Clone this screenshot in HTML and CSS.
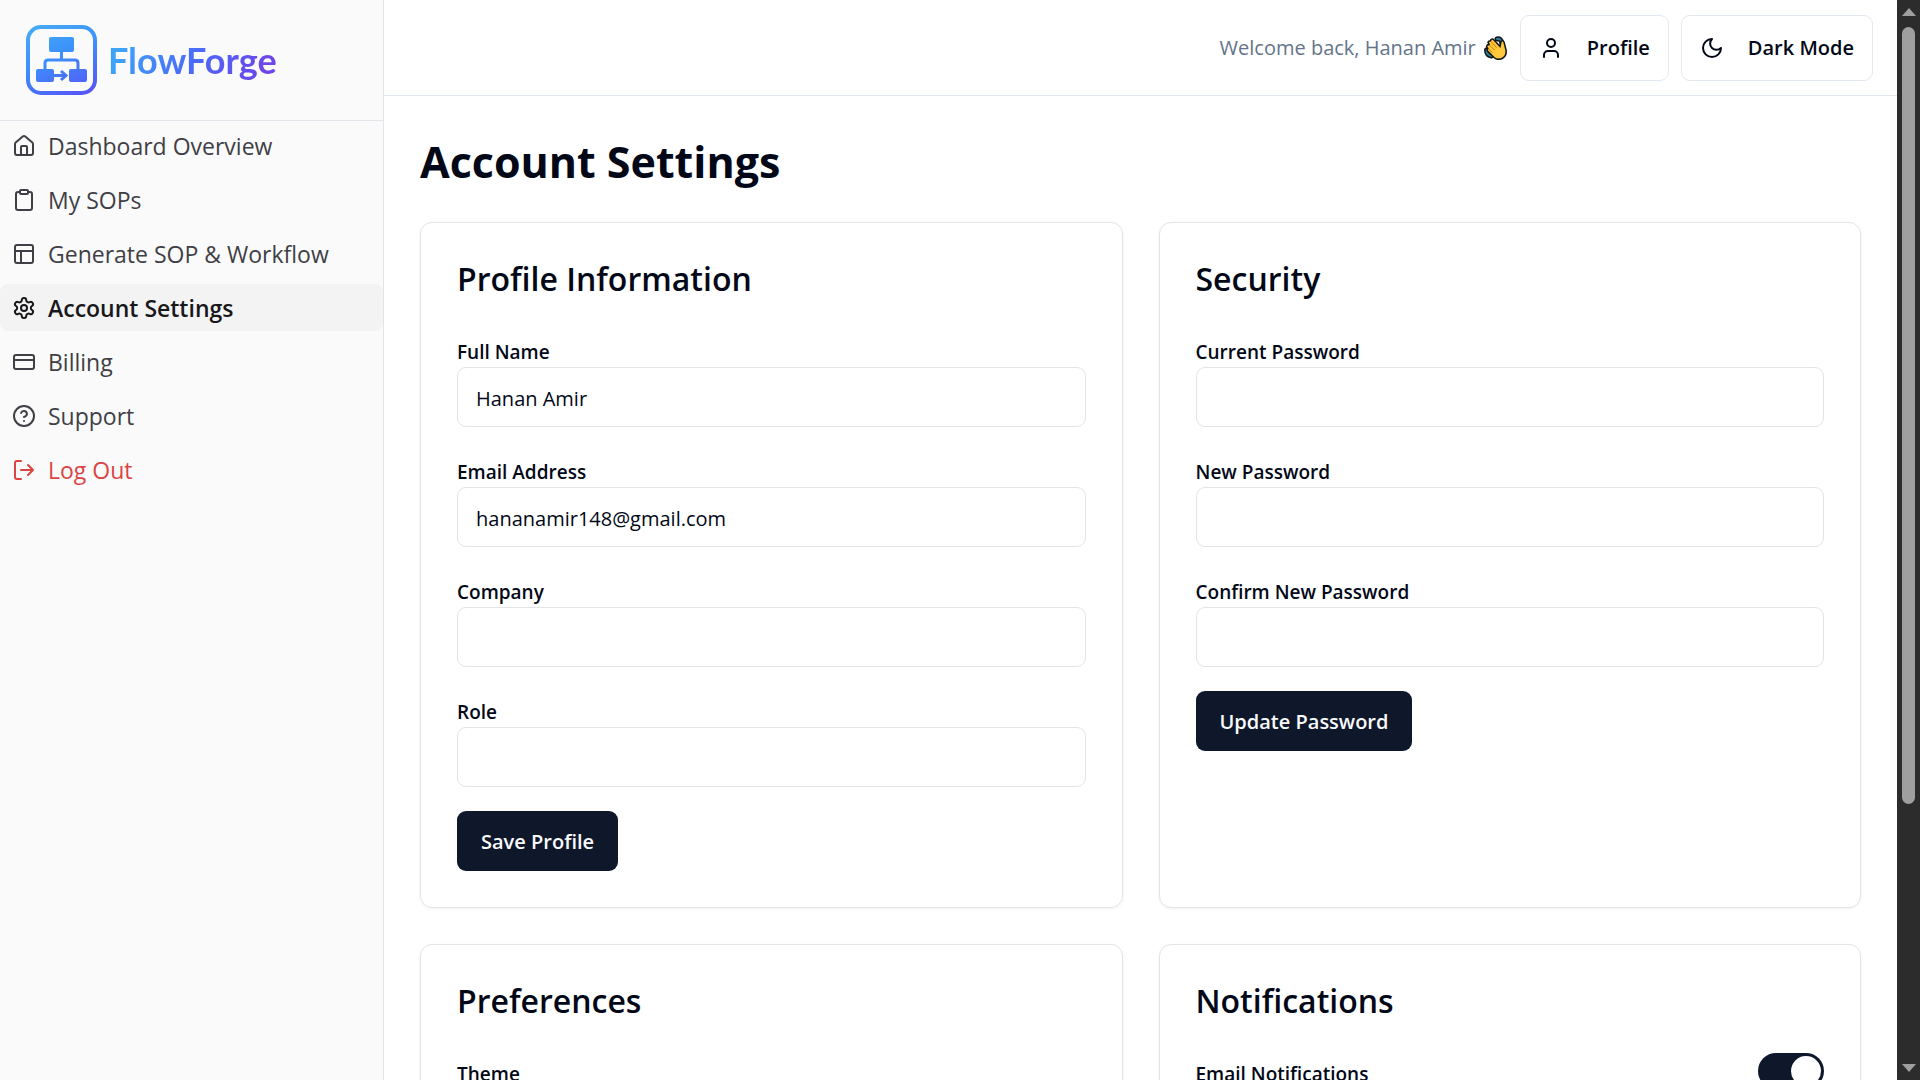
FILE: index.html
```html
<!DOCTYPE html>
<html lang="en">
<head>
    <meta charset="UTF-8">
    <meta name="viewport" content="width=device-width, initial-scale=1.0">
    <title>FlowForge - Account Settings</title>
    <link rel="stylesheet" href="styles.css">
</head>
<body>
    <aside class="sidebar">
        <a class="logo" href="#">
            <svg class="logo-icon" viewBox="0 0 72 72" aria-hidden="true">
                <defs>
                    <linearGradient id="logo-gradient" gradientUnits="userSpaceOnUse" x1="20" y1="0" x2="50" y2="72">
                        <stop offset="0" stop-color="#45a8f5"/>
                        <stop offset="0.4" stop-color="#3b93fb"/>
                        <stop offset="1" stop-color="#5558f5"/>
                    </linearGradient>
                </defs>
                <rect x="2" y="3" width="67" height="66" rx="13" fill="none" stroke="url(#logo-gradient)" stroke-width="4"/>
                <g fill="url(#logo-gradient)">
                    <rect x="23" y="13" width="25" height="15" rx="2"/>
                    <rect x="10" y="45" width="18" height="13" rx="2"/>
                    <rect x="43" y="45" width="18" height="13" rx="2"/>
                </g>
                <path d="M35.500 28v8M19 45v-6q0-3 3-3h27q3 0 3 3v6M28 51.500h11M35 47l5 4.500-5 4.500" fill="none" stroke="url(#logo-gradient)" stroke-width="3"/>
            </svg>
            <span class="logo-text">FlowForge</span>
        </a>
        <nav class="menu">
            <a class="menu-item" href="#">
                <svg class="icon" viewBox="0 0 24 24"><path d="M3 10a2 2 0 0 1 .7-1.500l7-6a2 2 0 0 1 2.600 0l7 6A2 2 0 0 1 21 10v9a2 2 0 0 1-2 2H5a2 2 0 0 1-2-2z"/><path d="M9 21v-8a1 1 0 0 1 1-1h4a1 1 0 0 1 1 1v8"/></svg>
                Dashboard Overview
            </a>
            <a class="menu-item" href="#">
                <svg class="icon" viewBox="0 0 24 24"><rect x="8" y="2" width="8" height="4" rx="1"/><path d="M16 4h2a2 2 0 0 1 2 2v14a2 2 0 0 1-2 2H6a2 2 0 0 1-2-2V6a2 2 0 0 1 2-2h2"/></svg>
                My SOPs
            </a>
            <a class="menu-item" href="#">
                <svg class="icon" viewBox="0 0 24 24"><rect x="3" y="3" width="18" height="18" rx="2"/><path d="M3 9h18M9 21V9"/></svg>
                Generate SOP &amp; Workflow
            </a>
            <a class="menu-item active" href="#" aria-current="page">
                <svg class="icon" viewBox="0 0 24 24"><path d="M12.220 2h-.44a2 2 0 0 0-2 2v.18a2 2 0 0 1-1 1.730l-.43.25a2 2 0 0 1-2 0l-.15-.08a2 2 0 0 0-2.730.73l-.22.38a2 2 0 0 0 .73 2.730l.15.1a2 2 0 0 1 1 1.720v.51a2 2 0 0 1-1 1.740l-.15.09a2 2 0 0 0-.73 2.730l.22.38a2 2 0 0 0 2.730.73l.15-.08a2 2 0 0 1 2 0l.43.25a2 2 0 0 1 1 1.730V20a2 2 0 0 0 2 2h.44a2 2 0 0 0 2-2v-.18a2 2 0 0 1 1-1.730l.43-.25a2 2 0 0 1 2 0l.15.08a2 2 0 0 0 2.730-.73l.22-.39a2 2 0 0 0-.73-2.730l-.15-.08a2 2 0 0 1-1-1.740v-.5a2 2 0 0 1 1-1.740l.15-.09a2 2 0 0 0 .73-2.730l-.22-.38a2 2 0 0 0-2.730-.73l-.15.08a2 2 0 0 1-2 0l-.43-.25a2 2 0 0 1-1-1.730V4a2 2 0 0 0-2-2z"/><circle cx="12" cy="12" r="3"/></svg>
                Account Settings
            </a>
            <a class="menu-item" href="#">
                <svg class="icon" viewBox="0 0 24 24"><rect x="2" y="5" width="20" height="14" rx="2"/><path d="M2 10h20"/></svg>
                Billing
            </a>
            <a class="menu-item" href="#">
                <svg class="icon" viewBox="0 0 24 24"><circle cx="12" cy="12" r="10"/><path d="M9.090 9a3 3 0 0 1 5.830 1c0 2-3 3-3 3M12 17h.01"/></svg>
                Support
            </a>
            <a class="menu-item logout" href="#">
                <svg class="icon" viewBox="0 0 24 24"><path d="M9 21H5a2 2 0 0 1-2-2V5a2 2 0 0 1 2-2h4M16 17l5-5-5-5M21 12H9"/></svg>
                Log Out
            </a>
        </nav>
    </aside>

    <div class="page">
        <header class="topbar">
            <p class="welcome">
                Welcome back, Hanan Amir
                <svg class="wave" viewBox="0 0 24 24" role="img" aria-label="waving hand">
                    <path d="M13 3q4-1 5 4.500M2.500 14q0 5 5 6" fill="none" stroke="#14141a" stroke-width="5" stroke-linecap="round"/>
                    <path d="M13 3q4-1 5 4.500M2.500 14q0 5 5 6" fill="none" stroke="#2a8096" stroke-width="2" stroke-linecap="round"/>
                    <path d="M3 9.500q1-1.500 2.500-.5L4 6.500Q4.500 4.500 6.500 5L7 3.500q1.500-1 3 .5l6 6.500 1-5q2-1.500 3 .5l2 8q1 5-3 8-5 3-9-.5L3.500 15q-1-1.500.5-2.500L2.500 11Z" fill="#ffc83d" stroke="#14141a" stroke-width="1.500"/>
                    <path d="M5.500 9l5 5M6.500 5l6 6.500M4 12.500l4.500 4" fill="none" stroke="#d67d00" stroke-width="1"/>
                </svg>
            </p>
            <button class="outline-btn" type="button">
                <svg class="icon" viewBox="0 0 24 24"><circle cx="12" cy="7" r="4"/><path d="M19 21v-2a4 4 0 0 0-4-4H9a4 4 0 0 0-4 4v2"/></svg>
                Profile
            </button>
            <button class="outline-btn" type="button">
                <svg class="icon" viewBox="0 0 24 24"><path d="M12 3a6 6 0 0 0 9 9 9 9 0 1 1-9-9Z"/></svg>
                Dark Mode
            </button>
        </header>

        <main class="content">
            <h1>Account Settings</h1>
            <div class="cards">
                <section class="card">
                    <h2>Profile Information</h2>
                    <form class="form">
                        <div class="field">
                            <label for="name">Full Name</label>
                            <input type="text" id="name" value="Hanan Amir">
                        </div>
                        <div class="field">
                            <label for="email">Email Address</label>
                            <input type="email" id="email" value="hananamir148@gmail.com">
                        </div>
                        <div class="field">
                            <label for="company">Company</label>
                            <input type="text" id="company">
                        </div>
                        <div class="field">
                            <label for="role">Role</label>
                            <input type="text" id="role">
                        </div>
                        <button class="primary-btn" type="button">Save Profile</button>
                    </form>
                </section>

                <section class="card">
                    <h2>Security</h2>
                    <form class="form">
                        <div class="field">
                            <label for="current">Current Password</label>
                            <input type="password" id="current">
                        </div>
                        <div class="field">
                            <label for="new">New Password</label>
                            <input type="password" id="new">
                        </div>
                        <div class="field">
                            <label for="confirm">Confirm New Password</label>
                            <input type="password" id="confirm">
                        </div>
                        <button class="primary-btn" type="button">Update Password</button>
                    </form>
                </section>

                <section class="card">
                    <h2>Preferences</h2>
                    <div class="field">
                        <label for="theme">Theme</label>
                        <select id="theme">
                            <option>Light</option>
                            <option>Dark</option>
                        </select>
                    </div>
                </section>

                <section class="card">
                    <h2>Notifications</h2>
                    <div class="switch-row">
                        <label for="email-notifications">Email Notifications</label>
                        <input class="switch" type="checkbox" id="email-notifications" checked>
                    </div>
                </section>
            </div>
        </main>
    </div>

    <div class="scrollbar" aria-hidden="true">
        <svg class="arrow" viewBox="0 0 14 8"><path d="M7 0l7 8H0z"/></svg>
        <div class="thumb"></div>
        <svg class="arrow" viewBox="0 0 14 8"><path d="M7 8L0 0h14z"/></svg>
    </div>
</body>
</html>
```
FILE: styles.css
```css
* {
    box-sizing: border-box;
}
body {
    margin: 0;
    height: 100vh;
    overflow: hidden;
    display: flex;
    font-family: "Open Sans", "Noto Sans", sans-serif;
    font-size: 20px;
    color: #020817;
    background-color: white;
}
h1, h2, p {
    margin: 0;
}
button, input, select {
    font: inherit;
    color: inherit;
}
.icon {
    width: 24px;
    height: 24px;
    flex: none;
    fill: none;
    stroke: currentColor;
    stroke-width: 2;
    stroke-linecap: round;
    stroke-linejoin: round;
}

/* sidebar */
.sidebar {
    flex: none;
    width: 384px;
    border-right: 1px solid #e2e4ea;
    background-color: #fafafa;
}
.logo {
    display: flex;
    align-items: center;
    gap: 10px;
    height: 121px;
    padding: 0 26px;
    border-bottom: 1px solid #e2e4ea;
    text-decoration: none;
}
.logo-icon {
    width: 72px;
    height: 72px;
}
.logo-text {
    font-family: Lato, sans-serif;
    font-size: 36px;
    font-weight: 700;
    line-height: 48px;
    background: linear-gradient(120deg, #3fa4f8 10%, #4a6cf8 50%, #6d45e8 90%);
    background-clip: text;
    color: transparent;
}
.menu {
    display: flex;
    flex-direction: column;
    gap: 7px;
    padding-top: 1px;
}
.menu-item {
    display: flex;
    align-items: center;
    gap: 12px;
    height: 47px;
    padding: 0 12px;
    border-radius: 8px;
    font-size: 23px;
    color: #3f3f46;
    text-decoration: none;
}
.menu-item.active {
    background-color: #f3f3f4;
    color: #18181b;
    font-weight: 600;
}
.menu-item.logout {
    color: #dc4444;
}

/* top bar */
.page {
    flex: 1;
    min-width: 0;
}
.topbar {
    display: flex;
    align-items: center;
    justify-content: flex-end;
    gap: 12px;
    height: 96px;
    padding: 0 24px;
    border-bottom: 1px solid #e2e8f0;
}
.welcome {
    display: flex;
    align-items: center;
    gap: 8px;
    color: #64748b;
}
.wave {
    width: 24px;
    height: 24px;
}
.outline-btn {
    display: flex;
    align-items: center;
    gap: 24px;
    height: 66px;
    padding: 0 18px;
    border: 1px solid #e2e8f0;
    border-radius: 9px;
    background-color: white;
    font-weight: 600;
}

/* settings */
.content {
    padding: 36px;
}
h1 {
    font-size: 43px;
    line-height: 60px;
    margin-bottom: 30px;
}
.cards {
    display: grid;
    grid-template-columns: 1fr 1fr;
    gap: 36px;
}
.card {
    padding: 36px;
    border: 1px solid #e4e4e7;
    border-radius: 12px;
    box-shadow: 0 1px 3px rgba(0, 0, 0, 0.06);
}
h2 {
    font-size: 32px;
    font-weight: 600;
    line-height: 40px;
    margin-bottom: 32px;
}
.form {
    display: flex;
    flex-direction: column;
    align-items: flex-start;
    gap: 24px;
}
.field {
    width: 100%;
}
label {
    display: block;
    padding-top: 6px;
    font-size: 19px;
    line-height: 30px;
    font-weight: 600;
}
.field input,
.field select {
    display: block;
    width: 100%;
    height: 60px;
    padding: 2px 18px 0;
    border: 1px solid #e4e4e7;
    border-radius: 9px;
    background-color: white;
}
.primary-btn {
    height: 60px;
    padding: 0 24px;
    border: none;
    border-radius: 9px;
    background-color: #0f172a;
    color: #f8fafc;
    font-weight: 600;
}
.switch-row {
    display: flex;
    align-items: center;
    justify-content: space-between;
}
.switch {
    appearance: none;
    width: 66px;
    height: 36px;
    margin: 0;
    padding: 3px;
    border-radius: 18px;
    background-color: #0f172a;
}
.switch::before {
    content: "";
    display: block;
    width: 30px;
    height: 30px;
    margin-left: auto;
    border-radius: 50%;
    background-color: white;
}

/* scrollbar */
.scrollbar {
    flex: none;
    display: flex;
    flex-direction: column;
    align-items: center;
    width: 23px;
    padding: 8px 0;
    background-color: #2c2c2c;
}
.arrow {
    width: 14px;
    height: 8px;
    fill: #9f9f9f;
}
.thumb {
    width: 13px;
    height: 73%;
    margin: 11px 0 auto;
    border-radius: 7px;
    background-color: #9f9f9f;
}
```
